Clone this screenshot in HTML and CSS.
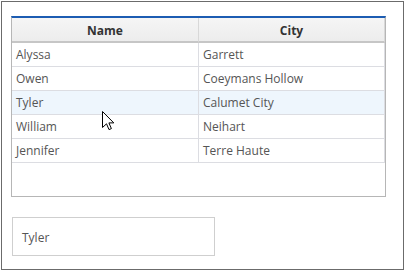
FILE: index.html
```html
<!doctype html>
<html lang="en">
<head>
  <meta charset="UTF-8">
  <title>Grid selection</title>
  <link rel="stylesheet" href="styles.css">
</head>
<body>
  <div class="frame">
    <div class="grid">
      <div class="row head">
        <div class="cell">Name</div>
        <div class="cell">City</div>
      </div>
      <div class="row">
        <div class="cell">Alyssa</div>
        <div class="cell">Garrett</div>
      </div>
      <div class="row">
        <div class="cell">Owen</div>
        <div class="cell">Coeymans Hollow</div>
      </div>
      <div class="row hover">
        <div class="cell">Tyler</div>
        <div class="cell">Calumet City</div>
      </div>
      <div class="row">
        <div class="cell">William</div>
        <div class="cell">Neihart</div>
      </div>
      <div class="row">
        <div class="cell">Jennifer</div>
        <div class="cell">Terre Haute</div>
      </div>
    </div>

    <div class="selected">Tyler</div>

    <svg class="cursor" width="13" height="20" viewBox="0 0 13 20">
      <path d="M0.5 0.5 L0.5 16.5 L4.5 12.8 L7 18.6 L9.4 17.6 L6.9 11.9 L11.8 11.9 Z" fill="#fff" stroke="#000" stroke-width="1" stroke-linejoin="miter"/>
    </svg>
  </div>
</body>
</html>
```

FILE: styles.css
```css
body { margin: 0; font-family: "Open Sans", "Noto Sans", sans-serif; font-size: 12px; color: #555; }
.frame { position: relative; margin: 1px; width: 403px; height: 269px; box-sizing: border-box; border: 1px solid #6b6b6b; padding: 14px 0 0 9px; }
.grid { width: 375px; height: 181px; box-sizing: border-box; border: 1px solid #b6b6b6; border-top: 2px solid #1c5cb2; }
.row { display: grid; grid-template-columns: 187px 186px; height: 24px; }
.cell { box-sizing: border-box; border-right: 1px solid #dcdde2; border-bottom: 1px solid #dcdde2; padding: 1px 4px 0; line-height: 22px; white-space: nowrap; overflow: hidden; }
.head { height: 25px; background: linear-gradient(#f5f5f5, #ececec); }
.head .cell { text-align: center; font-weight: bold; color: #333; padding-top: 2px; line-height: 21px; border-bottom: 2px solid #c6c6c6; border-right-color: #d8d8d8; }
.hover { background: #eef6fd; }
.selected { margin: 20px 0 0 1px; width: 203px; height: 39px; box-sizing: border-box; border: 1px solid #cfcfcf; padding: 2px 0 0 9px; line-height: 35px; }
.cursor { position: absolute; left: 100px; top: 109px; }
```
